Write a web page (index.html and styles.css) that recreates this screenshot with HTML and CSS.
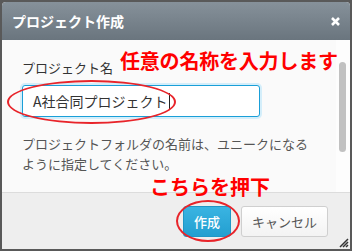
FILE: index.html
```html
<!DOCTYPE html>
<html lang="ja">
<head>
    <meta charset="UTF-8">
    <title>プロジェクト作成</title>
    <link rel="stylesheet" href="styles.css">
</head>
<body>
    <div class="page">
        <div class="dialog">
            <div class="titlebar">
                <span class="title">プロジェクト作成</span>
                <svg class="close" width="9" height="9" viewBox="0 0 9 9">
                    <path d="M1 1 L8 8 M8 1 L1 8" stroke="#fff" stroke-width="2.6"/>
                </svg>
            </div>
            <div class="content">
                <div class="form">
                    <label class="label">プロジェクト名</label>
                    <div class="input">A社合同プロジェクト<span class="caret"></span></div>
                    <p class="note">プロジェクトフォルダの名前は、ユニークになる<br>ように指定してください。</p>
                </div>
                <div class="scrollbar"><div class="thumb"></div></div>
            </div>
            <div class="footer">
                <button class="btn btn-primary">作成</button>
                <button class="btn btn-default">キャンセル</button>
                <svg class="grip" width="10" height="10" viewBox="0 0 10 10">
                    <path d="M9 1 L1 9 M9 4 L4 9 M9 7 L7 9" stroke="#333" stroke-width="1.5"/>
                </svg>
            </div>
        </div>

        <!-- annotations -->
        <div class="note-red note-input">任意の名称を入力します</div>
        <div class="note-red note-button">こちらを押下</div>
        <div class="ring ring-input"></div>
        <div class="ring ring-button"></div>
    </div>
</body>
</html>
```

FILE: styles.css
```css
* {
    margin: 0;
    padding: 0;
    box-sizing: border-box;
}

body {
    width: 352px;
    height: 251px;
    overflow: hidden;
    background: #595959;
    font-family: "Noto Sans CJK JP", "Noto Sans", sans-serif;
}

.page {
    position: relative;
    width: 352px;
    height: 251px;
    padding: 2px;
}

.dialog {
    display: flex;
    flex-direction: column;
    width: 348px;
    height: 247px;
    border-radius: 4px 4px 0 0;
    overflow: hidden;
    background: #fafafa;
}

.titlebar {
    display: flex;
    align-items: center;
    justify-content: space-between;
    height: 38px;
    padding: 0 10px 0 10px;
    background: linear-gradient(#86919a, #6a757e);
    color: #fff;
}

.title {
    font-size: 14px;
    font-weight: bold;
}

.close {
    margin-top: 1px;
}

.content {
    display: flex;
    height: 152px;
}

.form {
    flex: 1;
    padding: 19px 0 0 20px;
}

.label {
    display: block;
    font-size: 13px;
    line-height: 18px;
    color: #333;
}

.input {
    display: flex;
    align-items: center;
    width: 238px;
    height: 32px;
    margin-top: 8px;
    padding-left: 10px;
    border: 1px solid #1a9fd8;
    border-radius: 3px;
    background: #fff;
    box-shadow: 0 0 0 2px #d4eefa;
    font-size: 14px;
    color: #333;
}

.caret {
    width: 1px;
    height: 16px;
    margin-left: 1px;
    background: #222;
}

.note {
    margin-top: 17px;
    font-size: 13px;
    line-height: 20px;
    color: #555;
}

.scrollbar {
    width: 14px;
    padding: 22px 0 0 3px;
    background: #fdfdfd;
}

.thumb {
    width: 7px;
    height: 90px;
    border-radius: 4px;
    background: #c1c1c1;
}

.footer {
    position: relative;
    flex: 1;
    display: flex;
    align-items: center;
    justify-content: flex-end;
    gap: 10px;
    padding-right: 22px;
    border-top: 1px solid #dcdcdc;
    background: #eeeeee;
}

.btn {
    height: 31px;
    padding: 0 10px;
    border-radius: 3px;
    font-family: inherit;
    font-size: 13px;
}

.btn-primary {
    border: 1px solid #1f97c6;
    background: linear-gradient(#3ab4e2, #239fd0);
    color: #fff;
    font-weight: 500;
}

.btn-default {
    border: 1px solid #cfcfcf;
    background: linear-gradient(#ffffff, #f3f3f3);
    color: #555;
}

.grip {
    position: absolute;
    right: 1px;
    bottom: 1px;
}

/* red annotations laid over the dialog */
.note-red {
    position: absolute;
    color: #ff0000;
    font-size: 20px;
    font-weight: bold;
    line-height: 24px;
    white-space: nowrap;
}

.note-input {
    left: 120px;
    top: 49px;
    letter-spacing: -0.2px;
}

.note-button {
    left: 150px;
    top: 175px;
}

.ring {
    position: absolute;
    border: 2px solid #e8242a;
    border-radius: 50%;
}

.ring-input {
    left: 7px;
    top: 80px;
    width: 169px;
    height: 44px;
}

.ring-button {
    left: 176px;
    top: 200px;
    width: 64px;
    height: 42px;
}
```
